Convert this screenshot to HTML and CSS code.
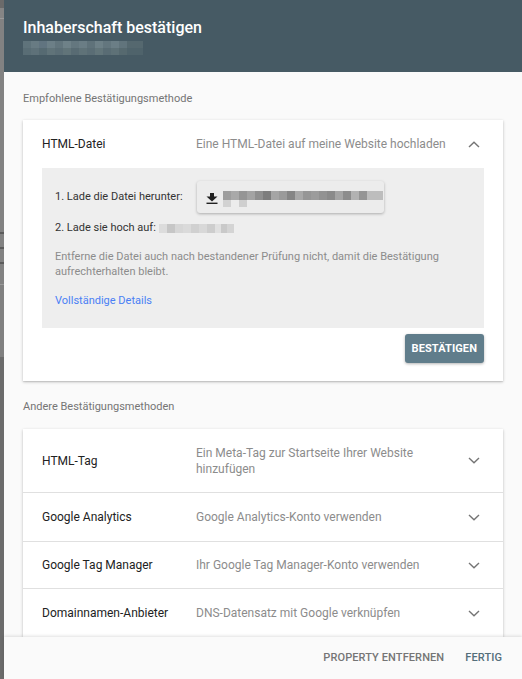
FILE: index.html
```html
<!DOCTYPE html>
<html lang="de">
<head>
<meta charset="utf-8">
<title>Inhaberschaft bestätigen</title>
<link rel="stylesheet" href="styles.css">
</head>
<body>
<div class="strip"></div>
<div class="dialog">
  <header class="header">
    <div class="title">Inhaberschaft bestätigen</div>
    <div class="subtitle-blur"></div>
  </header>
  <main class="content">
    <div class="section-label">Empfohlene Bestätigungsmethode</div>
    <section class="card">
      <div class="row">
        <div class="row-label">HTML-Datei</div>
        <div class="row-desc">Eine HTML-Datei auf meine Website hochladen</div>
        <svg class="chev" width="12" height="7" viewBox="0 0 12 7"><polyline points="1,6 6,1.2 11,6" fill="none" stroke="#757575" stroke-width="1.4"/></svg>
      </div>
      <div class="panel">
        <div class="step1">
          <span class="step-text">1. Lade die Datei herunter:</span>
          <div class="dl-btn">
            <svg class="dl-icon" width="12" height="11" viewBox="0 0 12 11"><polygon points="4,0 8,0 8,3.6 11.5,3.6 6,8.4 0.5,3.6 4,3.6" fill="#212121"/><rect x="0.5" y="9.6" width="11" height="1.4" fill="#212121"/></svg>
            <div class="dl-blur"><div class="dl-blur-top"></div><div class="dl-blur-bottom"></div></div>
          </div>
        </div>
        <div class="step2">
          <span class="step-text">2. Lade sie hoch auf:</span>
          <span class="url-blur"></span>
        </div>
        <p class="note">Entferne die Datei auch nach bestandener Prüfung nicht, damit die Bestätigung aufrechterhalten bleibt.</p>
        <a class="details" href="#">Vollständige Details</a>
      </div>
      <div class="actions">
        <button class="confirm">BESTÄTIGEN</button>
      </div>
    </section>
    <div class="section-label second">Andere Bestätigungsmethoden</div>
    <section class="card list">
      <div class="row tall">
        <div class="row-label">HTML-Tag</div>
        <div class="row-desc wrap">Ein Meta-Tag zur Startseite Ihrer Website hinzufügen</div>
        <svg class="chev" width="12" height="7" viewBox="0 0 12 7"><polyline points="1,1 6,5.8 11,1" fill="none" stroke="#757575" stroke-width="1.4"/></svg>
      </div>
      <div class="row item">
        <div class="row-label">Google Analytics</div>
        <div class="row-desc">Google Analytics-Konto verwenden</div>
        <svg class="chev" width="12" height="7" viewBox="0 0 12 7"><polyline points="1,1 6,5.8 11,1" fill="none" stroke="#757575" stroke-width="1.4"/></svg>
      </div>
      <div class="row item gtm">
        <div class="row-label">Google Tag Manager</div>
        <div class="row-desc">Ihr Google Tag Manager-Konto verwenden</div>
        <svg class="chev" width="12" height="7" viewBox="0 0 12 7"><polyline points="1,1 6,5.8 11,1" fill="none" stroke="#757575" stroke-width="1.4"/></svg>
      </div>
      <div class="row item">
        <div class="row-label">Domainnamen-Anbieter</div>
        <div class="row-desc">DNS-Datensatz mit Google verknüpfen</div>
        <svg class="chev" width="12" height="7" viewBox="0 0 12 7"><polyline points="1,1 6,5.8 11,1" fill="none" stroke="#757575" stroke-width="1.4"/></svg>
      </div>
    </section>
  </main>
  <footer class="footer">
    <button class="flat remove">PROPERTY ENTFERNEN</button>
    <button class="flat done">FERTIG</button>
  </footer>
</div>
</body>
</html>
```

FILE: styles.css
```css
* { box-sizing: border-box; }
html, body { margin: 0; padding: 0; }
body {
  display: flex;
  height: 679px;
  overflow: hidden;
  font-family: Roboto, "Liberation Sans", Arial, sans-serif;
  background: #7d7d7d;
}
.strip {
  width: 4px;
  flex: none;
  background:
    linear-gradient(180deg,
      #6a6a6a 0 8px, #858585 8px 18px, #9a9a9a 18px 19px,
      #828282 19px 232px, #5c5c5c 232px 234px, #828282 234px 247px,
      #5c5c5c 247px 249px, #828282 249px 262px, #5c5c5c 262px 264px,
      #828282 264px 284px, #9a9a9a 284px 285px, #808080 285px 357px,
      #6b6b6b 357px 679px);
}
.dialog {
  flex: 1;
  display: flex;
  flex-direction: column;
  height: 679px;
  background: #fafafa;
  min-width: 0;
}
.header {
  flex: none;
  height: 72px;
  background: #465a64;
  padding: 18px 19px 0 19px;
}
.title {
  color: #fff;
  font-size: 16px;
  line-height: 20px;
  font-weight: 500;
}
.subtitle-blur {
  margin-top: 3px;
  width: 120px;
  height: 14px;
  background:
    linear-gradient(90deg, #5f737b 0 8px, #687b83 8px 16px, #617480 16px 24px, #6c7f87 24px 32px, #62757d 32px 40px, #6e8188 40px 48px, #64777f 48px 56px, #6a7d85 56px 64px, #5f727a 64px 72px, #6d8087 72px 80px, #63767e 80px 88px, #6b7e86 88px 96px, #61747c 96px 104px, #55686f 104px 120px) top / 100% 7px no-repeat,
    linear-gradient(90deg, #596d75 0 8px, #5e7179 8px 16px, #566a72 16px 24px, #607379 24px 32px, #5b6e76 32px 40px, #617479 40px 48px, #586b73 48px 56px, #5f7278 56px 64px, #5a6d75 64px 72px, #62757a 72px 80px, #596c74 80px 88px, #5e7177 88px 96px, #56696f 96px 104px, #4f636b 104px 120px) bottom / 100% 7px no-repeat;
}
.content {
  flex: 1;
  overflow: hidden;
  padding: 19px 19px 0 19px;
  min-height: 0;
}
.section-label {
  font-size: 11px;
  line-height: 16px;
  color: #757575;
  margin-bottom: 13px;
}
.section-label.second {
  margin-top: 18px;
  margin-bottom: 14px;
}
.card {
  background: #fff;
  box-shadow: 0 1px 3px rgba(0,0,0,0.22), 0 1px 1px rgba(0,0,0,0.08);
}
.row {
  display: flex;
  align-items: center;
  height: 48px;
  padding: 0 23px 0 19px;
  font-size: 12px;
}
.row-label {
  width: 154px;
  flex: none;
  color: #222;
}
.row-desc {
  flex: 1;
  color: #8c8c8c;
  line-height: 16px;
}
.row-desc.wrap { padding-right: 40px; }
.chev { flex: none; margin-left: 8px; }
.list .row { border-top: 1px solid #e0e0e0; }
.list .row:first-child { border-top: none; }
.row.tall { height: 63px; }
.row.item { height: 49px; }
.row.item.gtm { height: 47px; }
.panel {
  margin: 0 19px;
  background: #eeeeee;
  padding: 13px 13px 19px 13px;
}
.step1 {
  display: flex;
  align-items: center;
  height: 32px;
}
.step-text {
  font-size: 11px;
  color: #333;
  line-height: 16px;
}
.dl-btn {
  margin-left: 14px;
  width: 187px;
  height: 32px;
  background: #ececec;
  border-radius: 3px;
  box-shadow: 0 1px 3px rgba(0,0,0,0.28);
  display: flex;
  align-items: flex-start;
  padding: 10px 0 0 9px;
}
.dl-icon { margin-top: 2px; flex: none; }
.dl-blur { margin-left: 5px; }
.dl-blur-top {
  width: 160px;
  height: 9px;
  background: linear-gradient(90deg, #9e9e9e 0 8px, #a9a9a9 8px 16px, #959595 16px 24px, #a3a3a3 24px 32px, #8f8f8f 32px 40px, #7d7d7d 40px 48px, #a5a5a5 48px 56px, #9a9a9a 56px 64px, #858585 64px 72px, #a8a8a8 72px 80px, #969696 80px 88px, #9c9c9c 88px 96px, #929292 96px 104px, #8a8a8a 104px 112px, #a4a4a4 112px 120px, #8c8c8c 120px 128px, #b2b2b2 128px 136px, #959595 136px 144px, #bdbdbd 144px 160px);
}
.dl-blur-bottom {
  width: 24px;
  height: 7px;
  background: linear-gradient(90deg, #d2d2d2 0 8px, transparent 8px 16px, #cfcfcf 16px 24px);
}
.step2 {
  margin-top: 7px;
  display: flex;
  align-items: center;
}
.url-blur {
  display: inline-block;
  margin-left: 3px;
  width: 75px;
  height: 9px;
  background: linear-gradient(90deg, #dcdcdc 0 8px, #c6c6c6 8px 16px, #d6d6d6 16px 24px, #dadada 24px 32px, #d0d0d0 32px 40px, #d8d8d8 40px 48px, #cdcdcd 48px 56px, #e0e0e0 56px 62px, #c9c9c9 62px 68px, #d4d4d4 68px 75px);
}
.note {
  margin: 13px 0 0 0;
  font-size: 11px;
  line-height: 15px;
  color: #8c8c8c;
}
.details {
  display: block;
  margin-top: 14px;
  font-size: 11px;
  line-height: 16px;
  color: #4a80f5;
  text-decoration: none;
}
.actions {
  display: flex;
  justify-content: flex-end;
  padding: 6px 19px 18px 0;
}
.confirm {
  height: 29px;
  padding: 0 7px;
  border: none;
  border-radius: 3px;
  background: #607d8b;
  color: #fff;
  font-family: Roboto, "Liberation Sans", Arial, sans-serif;
  font-size: 11px;
  font-weight: 700;
  letter-spacing: 0.1px;
  box-shadow: 0 1px 3px rgba(0,0,0,0.3);
}
.footer {
  flex: none;
  height: 42px;
  background: #fafafa;
  box-shadow: 0 -1px 3px rgba(0,0,0,0.12);
  position: relative;
  display: flex;
  justify-content: flex-end;
  align-items: center;
  gap: 21px;
  padding: 0 20px 1px 0;
}
.flat {
  border: none;
  background: none;
  padding: 0;
  font-family: Roboto, "Liberation Sans", Arial, sans-serif;
  font-size: 11px;
  font-weight: 500;
  letter-spacing: 0.1px;
}
.remove { color: #757575; }
.done { color: #546e7a; }
```
